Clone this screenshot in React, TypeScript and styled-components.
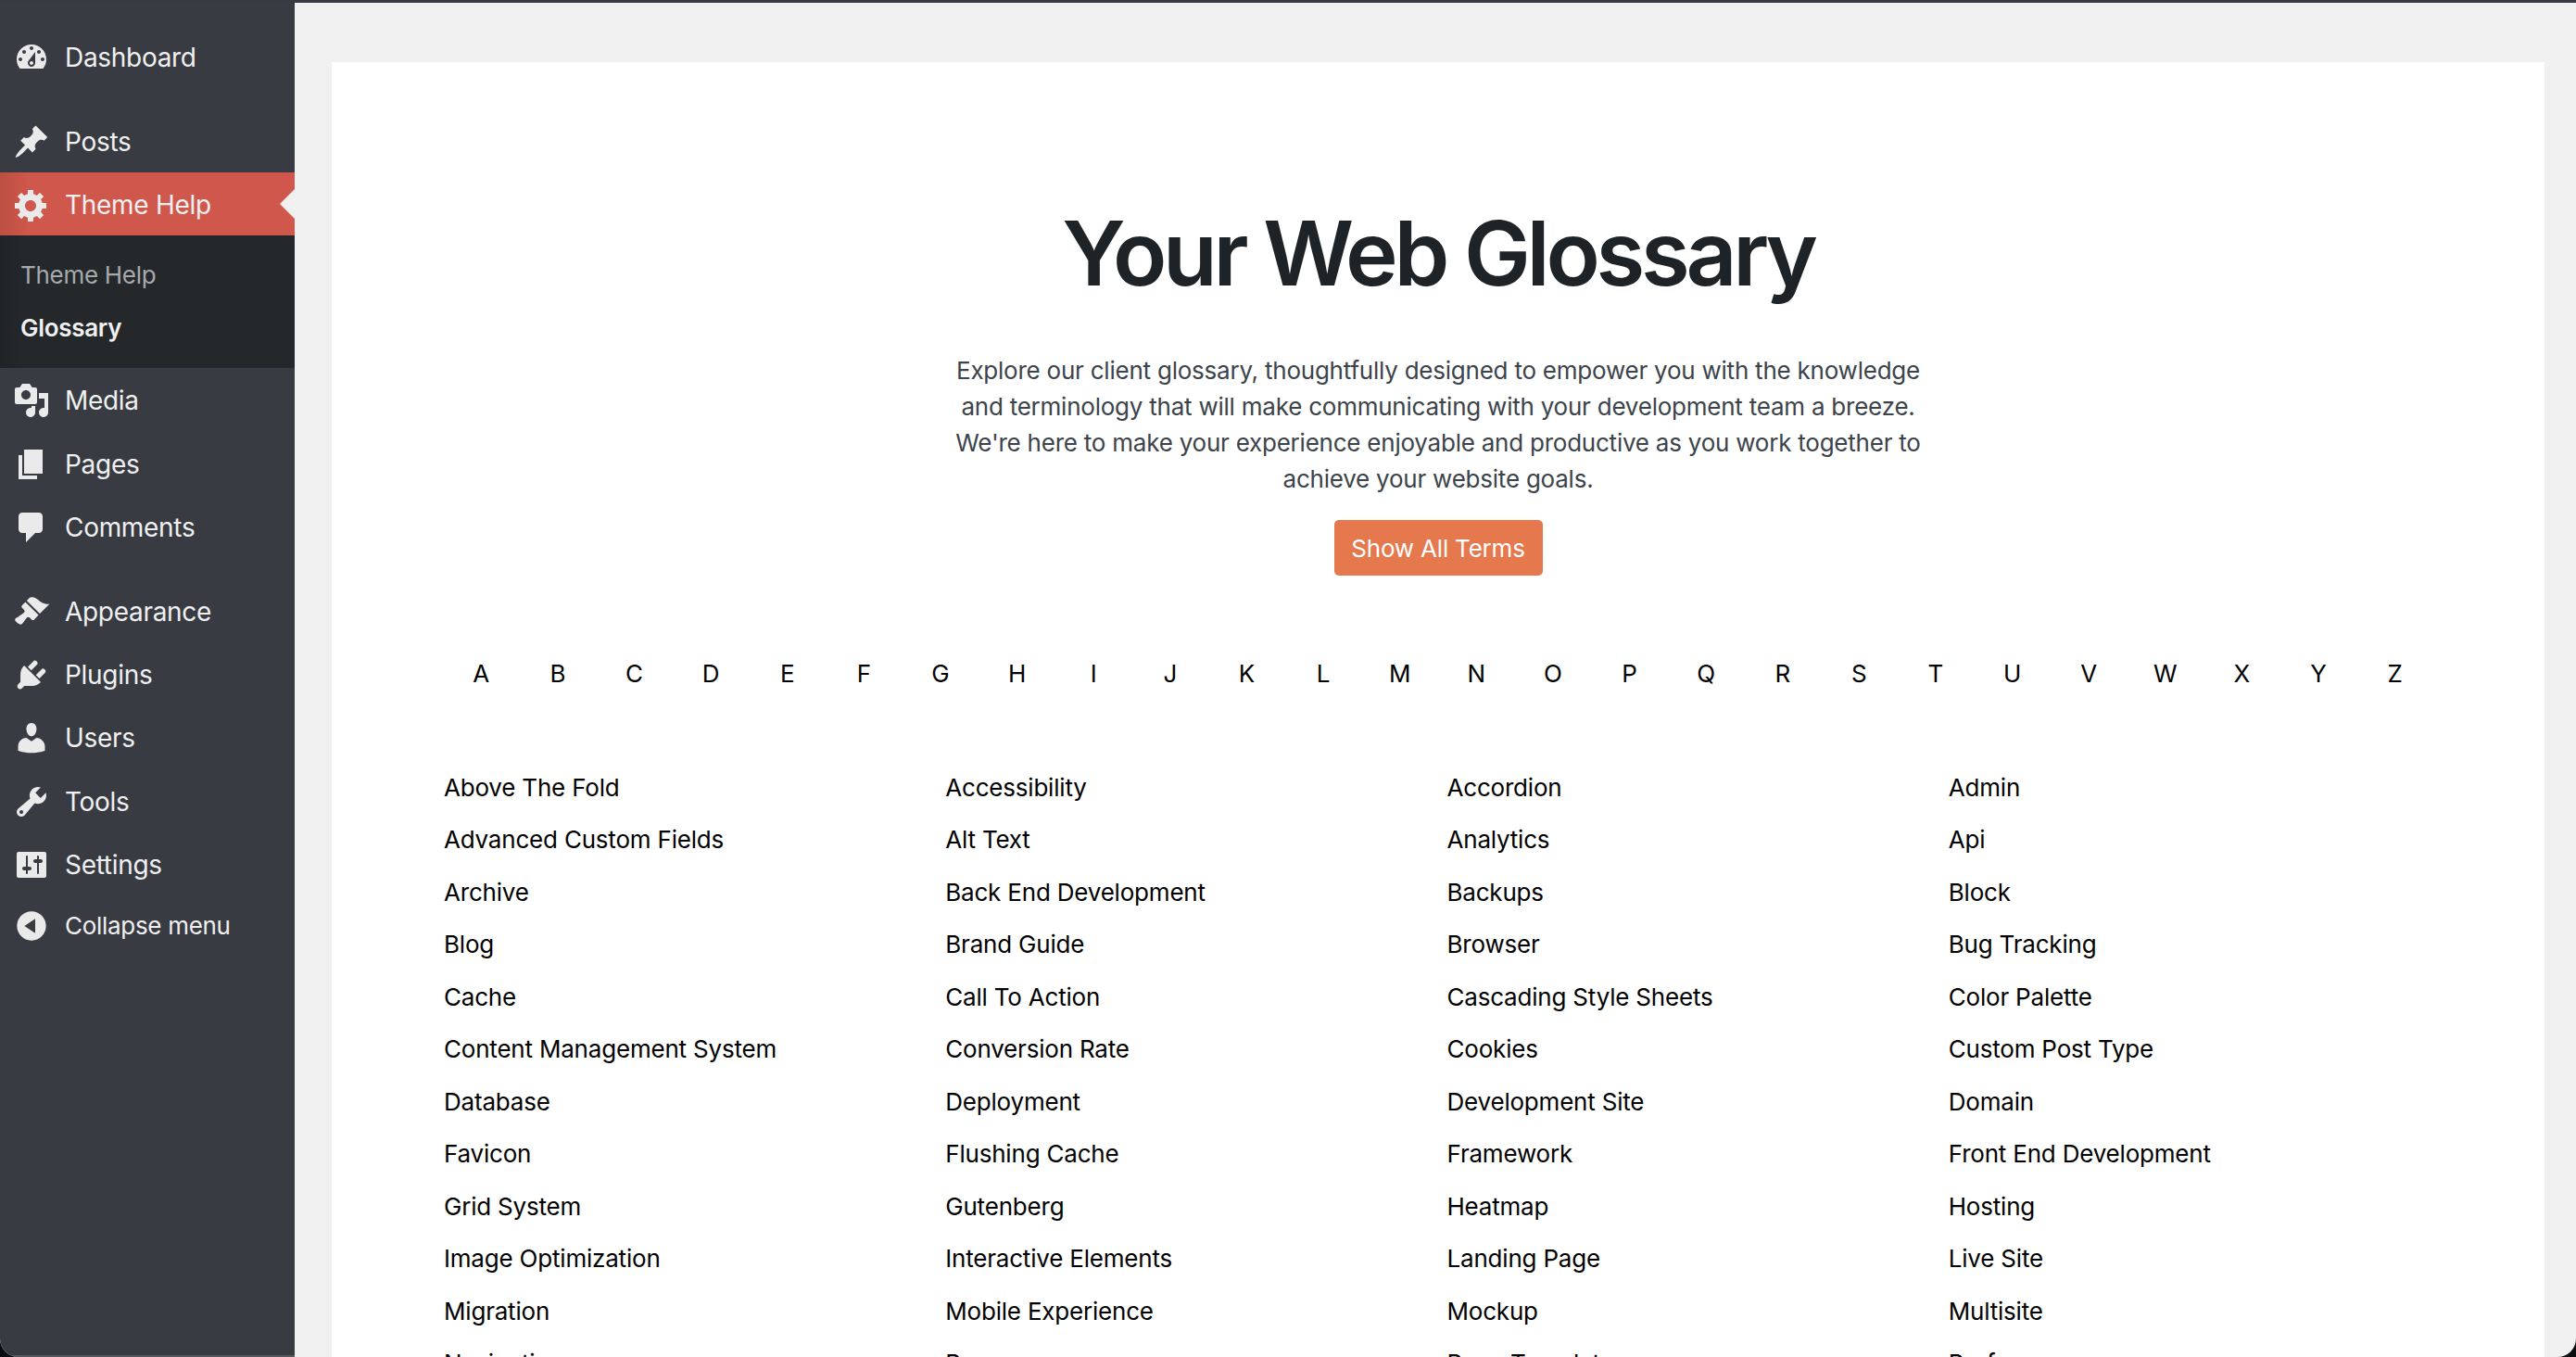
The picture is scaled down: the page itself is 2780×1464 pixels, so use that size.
import styled, { createGlobalStyle } from "styled-components"

// ── Data ──────────────────────────────────────────────────────────────────────

const ICONS: Record<string, string> = {
    dashboard:
        "M3.76 16h12.48c1.1-1.37 1.76-3.11 1.76-5 0-4.42-3.58-8-8-8s-8 3.58-8 8c0 1.89.66 3.63 1.76 5zM10 4c.55 0 1 .45 1 1s-.45 1-1 1-1-.45-1-1 .45-1 1-1zM6 6c.55 0 1 .45 1 1s-.45 1-1 1-1-.45-1-1 .45-1 1-1zm8 0c.55 0 1 .45 1 1s-.45 1-1 1-1-.45-1-1 .45-1 1-1zm-5.37 5.55L12 7v6c0 1.1-.9 2-2 2s-2-.9-2-2c0-.57.24-1.08.63-1.45zM4 10c.55 0 1 .45 1 1s-.45 1-1 1-1-.45-1-1 .45-1 1-1zm12 0c.55 0 1 .45 1 1s-.45 1-1 1-1-.45-1-1 .45-1 1-1zm-5 3c0-.55-.45-1-1-1s-1 .45-1 1 .45 1 1 1 1-.45 1-1z",
    post: "M10.44 3.02l1.82-1.82 6.36 6.35-1.83 1.82c-1.05-.68-2.48-.57-3.41.36l-.75.75c-.92.93-1.04 2.35-.35 3.41l-1.83 1.82-2.41-2.41-2.8 2.79c-.42.42-3.38 2.71-3.8 2.29s1.86-3.39 2.28-3.81l2.79-2.79L4.1 9.36l1.83-1.82c1.05.69 2.48.57 3.4-.36l.75-.75c.93-.92 1.05-2.35.36-3.41z",
    generic:
        "M18 12h-2.18c-.17.7-.44 1.35-.81 1.93l1.54 1.54-2.1 2.1-1.54-1.54c-.58.36-1.23.63-1.91.79V19H8v-2.18c-.68-.16-1.33-.43-1.91-.79l-1.54 1.54-2.12-2.12 1.54-1.54c-.36-.58-.63-1.23-.79-1.91H1V9.03h2.17c.16-.7.44-1.35.8-1.94L2.43 5.55l2.1-2.1 1.54 1.54c.58-.37 1.24-.64 1.93-.81V2h3v2.18c.68.16 1.33.43 1.91.79l1.54-1.54 2.12 2.12-1.54 1.54c.36.59.64 1.24.8 1.94H18V12zm-8.5 1.5c1.66 0 3-1.34 3-3s-1.34-3-3-3-3 1.34-3 3 1.34 3 3 3z",
    media: "M13 11V4c0-.55-.45-1-1-1h-1.67L9 1H5L3.67 3H2c-.55 0-1 .45-1 1v7c0 .55.45 1 1 1h10c.55 0 1-.45 1-1zM7 4.5c1.38 0 2.5 1.12 2.5 2.5S8.38 9.5 7 9.5 4.5 8.38 4.5 7 5.62 4.5 7 4.5zM14 6h5v10.5c0 1.38-1.12 2.5-2.5 2.5S14 17.88 14 16.5s1.12-2.5 2.5-2.5c.17 0 .34.02.5.05V9h-3V6zm-4 8.05V13h2v3.5c0 1.38-1.12 2.5-2.5 2.5S7 17.88 7 16.5 8.12 14 9.5 14c.17 0 .34.02.5.05z",
    page: "M6 15V2h10v13H6zm-1 1h8v2H3V5h2v11z",
    comments: "M5 2h9c1.1 0 2 .9 2 2v7c0 1.1-.9 2-2 2h-2l-5 5v-5H5c-1.1 0-2-.9-2-2V4c0-1.1.9-2 2-2z",
    appearance:
        "M14.48 11.06L7.41 3.99l1.5-1.5c.5-.56 2.3-.47 3.51.32 1.21.8 1.43 1.28 2.91 2.1 1.18.64 2.45 1.26 4.45.85zm-.71.71L6.7 4.7 4.93 6.47c-.39.39-.39 1.02 0 1.41l1.06 1.06c.39.39.39 1.03 0 1.42-.6.6-1.43 1.11-2.21 1.69-.35.26-.7.53-1.01.84C1.43 13.23.5 14.18 1.6 15.3s2.31 2.16 3.44 1.06c.31-.31.58-.66.84-1.01.58-.78 1.09-1.61 1.69-2.21.39-.39 1.03-.39 1.42 0l1.06 1.06c.39.39 1.02.39 1.41 0z",
    plugins:
        "M13.11 4.36L9.87 7.6 8 5.73l3.24-3.24c.35-.34 1.05-.2 1.56.32.52.51.66 1.21.31 1.55zm-8 1.77l.91-1.12 9.01 9.01-1.19.84c-.71.71-2.63 1.16-3.82 1.16H6.14L4.9 17.26c-.59.59-1.54.59-2.12 0-.59-.58-.59-1.53 0-2.12l1.24-1.24v-3.88c0-1.13.4-3.19 1.09-3.89zm7.26 3.97l3.24-3.24c.34-.35 1.04-.21 1.55.31.52.51.66 1.21.31 1.55l-3.24 3.25z",
    users: "M10 9.25c-2.27 0-2.73-3.44-2.73-3.44C7 4.02 7.82 2 9.97 2c2.16 0 2.98 2.02 2.71 3.81 0 0-.41 3.44-2.68 3.44zm0 2.57L12.72 10c2.39 0 4.52 2.33 4.52 4.53v2.49s-3.65 1.13-7.24 1.13c-3.65 0-7.24-1.13-7.24-1.13v-2.49c0-2.25 1.94-4.48 4.47-4.48z",
    tools: "M16.68 9.77c-1.34 1.34-3.3 1.67-4.95.99l-5.41 6.52c-.99.99-2.59.99-3.58 0s-.99-2.59 0-3.57l6.52-5.42c-.68-1.65-.35-3.61.99-4.95 1.28-1.28 3.12-1.62 4.72-1.06l-2.89 2.89 2.82 2.82 2.86-2.87c.53 1.58.18 3.39-1.08 4.65zM3.81 16.21c.4.39 1.04.39 1.43 0 .4-.4.4-1.04 0-1.43-.39-.4-1.03-.4-1.43 0-.39.39-.39 1.03 0 1.43z",
    settings:
        "M18 16V4c0-.55-.45-1-1-1H3c-.55 0-1 .45-1 1v12c0 .55.45 1 1 1h14c.55 0 1-.45 1-1zM8 11h1c.55 0 1 .45 1 1s-.45 1-1 1H8v1.5c0 .28-.22.5-.5.5s-.5-.22-.5-.5V13H6c-.55 0-1-.45-1-1s.45-1 1-1h1V5.5c0-.28.22-.5.5-.5s.5.22.5.5V11zm5-2h-1c-.55 0-1-.45-1-1s.45-1 1-1h1V5.5c0-.28.22-.5.5-.5s.5.22.5.5V7h1c.55 0 1 .45 1 1s-.45 1-1 1h-1v5.5c0 .28-.22.5-.5.5s-.5-.22-.5-.5V9z",
    collapse: "M10 2.16c4.33 0 7.84 3.51 7.84 7.84s-3.51 7.84-7.84 7.84S2.16 14.33 2.16 10 5.71 2.16 10 2.16zm2 11.72V6.12L6.18 9.97z",
}

const LETTERS = "ABCDEFGHIJKLMNOPQRSTUVWXYZ".split("")

const TERMS = [
    "Above The Fold", "Accessibility", "Accordion", "Admin",
    "Advanced Custom Fields", "Alt Text", "Analytics", "Api",
    "Archive", "Back End Development", "Backups", "Block",
    "Blog", "Brand Guide", "Browser", "Bug Tracking",
    "Cache", "Call To Action", "Cascading Style Sheets", "Color Palette",
    "Content Management System", "Conversion Rate", "Cookies", "Custom Post Type",
    "Database", "Deployment", "Development Site", "Domain",
    "Favicon", "Flushing Cache", "Framework", "Front End Development",
    "Grid System", "Gutenberg", "Heatmap", "Hosting",
    "Image Optimization", "Interactive Elements", "Landing Page", "Live Site",
    "Migration", "Mobile Experience", "Mockup", "Multisite",
    "Navigation", "Pages", "Page Template", "Performance",
]

// ── Styled components ─────────────────────────────────────────────────────────

const GlobalStyle = createGlobalStyle`
    html, body {
        margin: 0;
        padding: 0;
        background: #0b0d0e;
        overflow: hidden;
    }
    * {
        box-sizing: border-box;
    }
`

const Window = styled.div`
    display: flex;
    width: 2780px;
    height: 1464px;
    overflow: hidden;
    border-radius: 0 0 20px 20px;
    border-top: 3px solid #363b41;
    background: #f0f0f1;
    font-family: Inter, "Noto Sans", sans-serif;
`

const Sidebar = styled.nav`
    flex: 0 0 318px;
    padding-top: 24px;
    background: #383b41;
    border-bottom: 2px solid #55585d;
`

const MenuRow = styled.div<{ $active?: boolean; $gapAfter?: boolean; $small?: boolean }>`
    position: relative;
    display: flex;
    align-items: center;
    gap: 16px;
    height: ${({ $small }) => ($small ? "63px" : "68.4px")};
    margin-bottom: ${({ $gapAfter }) => ($gapAfter ? "22px" : "0")};
    padding: 2px 0 0 14px;
    font-size: ${({ $small }) => ($small ? "26px" : "28px")};
    letter-spacing: -0.3px;
    color: #f0f0f1;
    background: ${({ $active }) =>
        $active ? "linear-gradient(90deg, #bb5042 0, #d0574b 32px)" : "transparent"};

    ${({ $active }) =>
        $active &&
        `&::after {
            content: "";
            position: absolute;
            right: 0;
            top: 50%;
            margin-top: -16px;
            border: 16px solid transparent;
            border-left-width: 0;
            border-right-color: #f0f0f1;
        }`}
`

const MenuIcon = styled.svg`
    flex: 0 0 40px;
    width: 40px;
    height: 40px;
    fill: #eaeaeb;
`

const SubMenu = styled.div`
    display: flex;
    flex-direction: column;
    height: 143px;
    padding-top: 14px;
    background: linear-gradient(90deg, #212426 0, #25282b 30px);
`

const SubItem = styled.div<{ $current?: boolean }>`
    display: flex;
    align-items: center;
    height: 57px;
    padding-left: 22px;
    font-size: 26px;
    letter-spacing: -0.3px;
    font-weight: ${({ $current }) => ($current ? 600 : 400)};
    color: ${({ $current }) => ($current ? "#f0f0f1" : "#a7aaad")};
`

const Main = styled.main`
    flex: 1;
    min-width: 0;
    padding: 64px 34px 0 40px;
`

const Card = styled.section`
    height: 1500px;
    padding: 149px 120px 0;
    background: #fff;
`

const Hero = styled.header`
    display: flex;
    flex-direction: column;
    align-items: center;
`

const Title = styled.h1`
    margin: 0;
    font-size: 96px;
    line-height: 115px;
    font-weight: 600;
    letter-spacing: -4.3px;
    color: #1d2327;
`

const Intro = styled.p`
    width: 1060px;
    margin: 49px 0 0;
    font-size: 26px;
    line-height: 39px;
    letter-spacing: -0.23px;
    text-align: center;
    color: #3c434a;
`

const ShowAllButton = styled.button`
    height: 60px;
    width: 225px;
    margin-top: 25px;
    padding: 0;
    border: 0;
    border-radius: 5px;
    background: #e5784d;
    color: #fff;
    font-family: inherit;
    font-size: 26px;
    letter-spacing: -0.2px;
`

const AlphabetBar = styled.div`
    display: grid;
    grid-template-columns: repeat(26, 1fr);
    margin-top: 86px;
    line-height: 40px;
    font-size: 26px;
    text-align: center;
    color: #000;
`

const TermGrid = styled.div`
    display: grid;
    grid-template-columns: repeat(4, 1fr);
    grid-auto-rows: 56.5px;
    column-gap: 18px;
    margin-top: 74px;
    padding-left: 1px;
`

const Term = styled.div`
    display: flex;
    align-items: center;
    font-size: 26px;
    letter-spacing: -0.2px;
    color: #000;
`

// ── App ───────────────────────────────────────────────────────────────────────

function Icon({ name }: { name: string }) {
    return (
        <MenuIcon viewBox="0 0 20 20" aria-hidden>
            <path d={ICONS[name]} />
        </MenuIcon>
    )
}

export default function App() {
    return (
        <>
            <GlobalStyle />
            <Window>
                <Sidebar>
                    <MenuRow $gapAfter><Icon name="dashboard" />Dashboard</MenuRow>
                    <MenuRow><Icon name="post" />Posts</MenuRow>
                    <MenuRow $active><Icon name="generic" />Theme Help</MenuRow>
                    <SubMenu>
                        <SubItem>Theme Help</SubItem>
                        <SubItem $current>Glossary</SubItem>
                    </SubMenu>
                    <MenuRow><Icon name="media" />Media</MenuRow>
                    <MenuRow><Icon name="page" />Pages</MenuRow>
                    <MenuRow $gapAfter><Icon name="comments" />Comments</MenuRow>
                    <MenuRow><Icon name="appearance" />Appearance</MenuRow>
                    <MenuRow><Icon name="plugins" />Plugins</MenuRow>
                    <MenuRow><Icon name="users" />Users</MenuRow>
                    <MenuRow><Icon name="tools" />Tools</MenuRow>
                    <MenuRow><Icon name="settings" />Settings</MenuRow>
                    <MenuRow $small><Icon name="collapse" />Collapse menu</MenuRow>
                </Sidebar>
                <Main>
                    <Card>
                        <Hero>
                            <Title>Your Web Glossary</Title>
                            <Intro>
                                Explore our client glossary, thoughtfully designed to empower you with the
                                knowledge and terminology that will make communicating with your development
                                team a breeze. We're here to make your experience enjoyable and productive as
                                you work together to achieve your website goals.
                            </Intro>
                            <ShowAllButton>Show All Terms</ShowAllButton>
                        </Hero>
                        <AlphabetBar>
                            {LETTERS.map((letter) => (
                                <span key={letter}>{letter}</span>
                            ))}
                        </AlphabetBar>
                        <TermGrid>
                            {TERMS.map((term) => (
                                <Term key={term}>{term}</Term>
                            ))}
                        </TermGrid>
                    </Card>
                </Main>
            </Window>
        </>
    )
}
